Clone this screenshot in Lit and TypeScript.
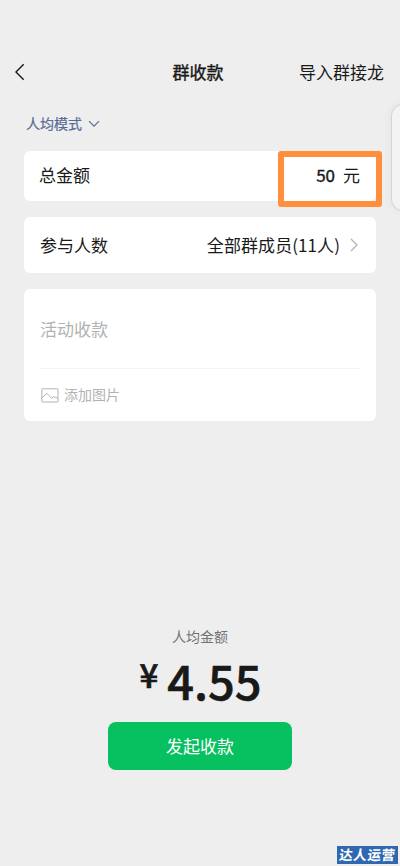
import { LitElement, html, css } from "lit";
import { customElement } from "lit/decorators.js";

@customElement("app-root")
export class AppRoot extends LitElement {
  static styles = css`
    :host {
      display: flex;
      flex-direction: column;
      position: relative;
      box-sizing: border-box;
      width: 400px;
      height: 866px;
      overflow: hidden;
      background: #eee;
      color: #191919;
      font: 17px/24px "Noto Sans CJK SC", sans-serif;
      white-space: nowrap;
    }
    svg { display: block; fill: none; flex: none; }
    .nav {
      display: grid;
      grid-template-columns: 1fr auto 1fr;
      align-items: center;
      height: 49px;
      margin-top: 47px;
      padding: 0 16px 0 14px;
      box-sizing: border-box;
    }
    .nav .title { -webkit-text-stroke: 0.4px; padding-right: 2px; }
    .nav .link { justify-self: end; }
    .mode {
      display: flex;
      align-items: center;
      gap: 6px;
      height: 20px;
      margin: 17px 0 18px 26px;
      color: #576b95;
      font-size: 14px;
      line-height: 20px;
      -webkit-text-stroke: 0.2px;
    }
    .card {
      display: flex;
      align-items: center;
      justify-content: space-between;
      margin: 0 24px 16px;
      padding: 0 16px;
      box-sizing: border-box;
      border-radius: 6px;
      background: #fff;
    }
    .total { height: 50px; padding-left: 15px; padding-bottom: 2px; }
    .people { height: 56px; }
    .amount { display: flex; gap: 8px; }
    .amount b { font-weight: 400; font-size: 17px; -webkit-text-stroke: 0.4px; }
    .members { display: flex; align-items: center; gap: 10px; padding-right: 2px; }
    .members span { letter-spacing: 0.08px; }
    .note { flex-direction: column; align-items: stretch; height: 132px; color: #b2b2b2; }
    .placeholder { display: flex; align-items: center; height: 79px; border-bottom: 1px solid #f3f3f3; }
    .add { display: flex; flex: 1; align-items: center; gap: 5px; padding: 0 0 1px 1px; font-size: 14px; }
    .add svg { margin-top: 1px; }
    .add span { padding-bottom: 1px; }
    .bottom {
      display: flex;
      flex-direction: column;
      align-items: center;
      margin-top: auto;
      padding-bottom: 96px;
    }
    .caption { font-size: 14px; line-height: 20px; color: #737373; }
    .sum { display: flex; align-items: flex-start; height: 76px; gap: 9px; padding-left: 1px; }
    .yen { font: 500 33px/57px "Noto Sans CJK SC", sans-serif; -webkit-text-stroke: 0.7px; }
    .value { font: 500 47px/67px "Noto Sans CJK SC", sans-serif; -webkit-text-stroke: 0.6px; }
    .button {
      width: 184px;
      height: 48px;
      border: 0;
      padding: 0;
      border-radius: 8px;
      background: #07c160;
      color: #fff;
      font: 17px/48px "Noto Sans CJK SC", sans-serif;
    }
    .highlight {
      position: absolute;
      left: 278px;
      top: 151px;
      width: 104px;
      height: 56px;
      box-sizing: border-box;
      border: 6.5px solid #ff8f3c;
      border-radius: 3px;
    }
    .handle {
      position: absolute;
      left: 391px;
      top: 104px;
      width: 30px;
      height: 107px;
      box-sizing: border-box;
      border: 1px solid #d4d4d4;
      border-radius: 12px;
      background: #f3f3f3;
      box-shadow: 0 0 9px rgba(0, 0, 0, 0.06);
    }
    .mark {
      position: absolute;
      left: 337px;
      top: 846px;
      width: 61px;
      height: 18px;
      background: #2f68b0;
      color: #fff;
      font-size: 13.5px;
      line-height: 17px;
      font-weight: 700;
      letter-spacing: 0.6px;
      text-align: center;
    }
    .mark span { display: block; transform: skewX(-6deg); }
  `;

  render() {
    return html`
      <header class="nav">
        <svg width="12" height="18" viewBox="0 0 12 18" stroke="#191919" stroke-width="1.4"><path d="M9.7 1.2 2 9l7.7 7.8" /></svg>
        <span class="title">群收款</span>
        <span class="link">导入群接龙</span>
      </header>
      <div class="mode">
        <span>人均模式</span>
        <svg width="12" height="8" viewBox="0 0 12 8" stroke="#576b95" stroke-width="1.2"><path d="m1 2.1 5 5 5-5" /></svg>
      </div>
      <section class="card total">
        <span>总金额</span>
        <span class="amount"><b>50</b><span>元</span></span>
      </section>
      <section class="card people">
        <span>参与人数</span>
        <span class="members">
          <span>全部群成员(11人)</span>
          <svg width="8" height="14" viewBox="0 0 8 14" stroke="#b2b2b2" stroke-width="1.3"><path d="m1 1 6 6-6 6" /></svg>
        </span>
      </section>
      <section class="card note">
        <div class="placeholder">活动收款</div>
        <div class="add">
          <svg width="18" height="15" viewBox="0 0 18 15" stroke="#b2b2b2"><rect x=".8" y=".8" width="16.2" height="13.2" rx=".5" /><path d="m1 9.6 4.8-4.2 5 5 1.8-2 1.2 1.3 1-.9 2.4 2.4" /></svg>
          <span>添加图片</span>
        </div>
      </section>
      <div class="bottom">
        <span class="caption">人均金额</span>
        <div class="sum"><span class="yen">¥</span><span class="value">4.55</span></div>
        <button class="button">发起收款</button>
      </div>
      <div class="highlight"></div>
      <div class="handle"></div>
      <div class="mark"><span>达人运营</span></div>
    `;
  }
}
